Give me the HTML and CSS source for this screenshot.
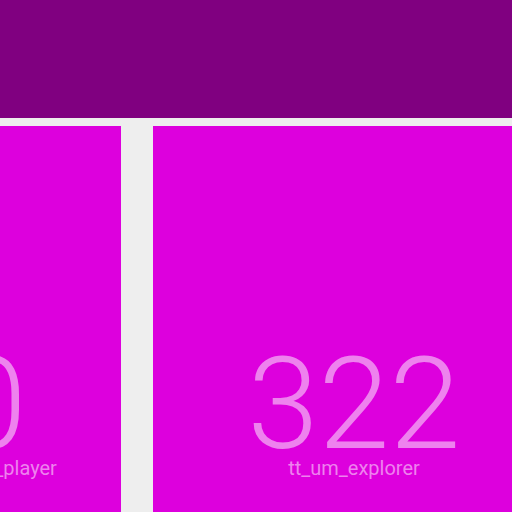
FILE: index.html
```html
<!DOCTYPE html>
<html>
<head>
<meta charset="utf-8">
<link rel="stylesheet" href="styles.css">
</head>
<body>
<header class="topbar"></header>
<main class="row">
  <section class="card">
    <div class="count">120</div>
    <div class="name">tt_um_rejunity_sn76489_player</div>
  </section>
  <section class="card">
    <div class="count">322</div>
    <div class="name">tt_um_explorer</div>
  </section>
</main>
</body>
</html>
```
FILE: styles.css
```css
html, body {
  margin: 0;
  padding: 0;
}
body {
  background: #eeeeee;
  overflow: hidden;
  width: 512px;
  height: 512px;
  font-family: Roboto, "Noto Sans", sans-serif;
}
.topbar {
  height: 118px;
  background: #800080;
}
.row {
  display: flex;
  gap: 32px;
  margin-top: 8px;
  margin-left: -281px;
}
.card {
  flex: 0 0 402px;
  height: 420px;
  background: #dd00dd;
  display: flex;
  flex-direction: column;
  align-items: center;
  padding-top: 228px;
  box-sizing: border-box;
  color: #ee82ee;
}
.count {
  font-size: 128px;
  font-weight: 300;
  line-height: 100px;
}
.name {
  font-size: 20px;
  line-height: 24px;
  margin-top: 2px;
  white-space: nowrap;
}
```
